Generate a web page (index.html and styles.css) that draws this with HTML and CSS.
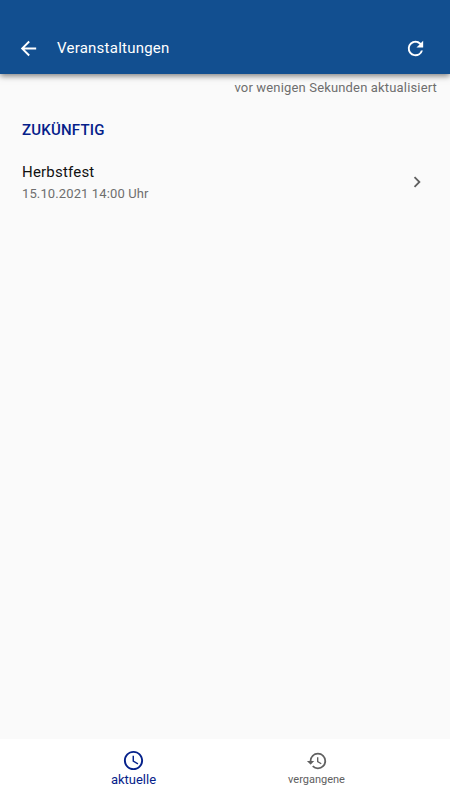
FILE: index.html
```html
<!DOCTYPE html>
<html lang="de">
<head>
    <meta charset="UTF-8">
    <meta name="viewport" content="width=device-width, initial-scale=1.0">
    <title>Veranstaltungen</title>
    <link rel="stylesheet" href="styles.css">
</head>
<body>
    <header class="app-bar">
        <button class="icon-button" aria-label="Zurück">
            <svg class="icon" viewBox="0 0 24 24"><path d="M20 11H7.83l5.59-5.59L12 4l-8 8 8 8 1.41-1.41L7.83 13H20v-2z"/></svg>
        </button>
        <h1 class="title">Veranstaltungen</h1>
        <button class="icon-button" aria-label="Aktualisieren">
            <svg class="icon" viewBox="0 0 24 24"><path d="M17.65 6.35A7.958 7.958 0 0 0 12 4a8 8 0 1 0 7.73 10h-2.08A5.99 5.99 0 0 1 12 18c-3.31 0-6-2.69-6-6s2.69-6 6-6c1.66 0 3.14.69 4.22 1.78L13 11h7V4l-2.35 2.35z"/></svg>
        </button>
    </header>

    <main class="content">
        <p class="updated">vor wenigen Sekunden aktualisiert</p>
        <h2 class="section-title">ZUKÜNFTIG</h2>
        <a class="event" href="#">
            <div class="event-text">
                <div class="event-name">Herbstfest</div>
                <div class="event-date">15.10.2021 14:00 Uhr</div>
            </div>
            <svg class="chevron" viewBox="0 0 24 24"><path d="M10 6 8.59 7.41 13.17 12l-4.58 4.59L10 18l6-6z"/></svg>
        </a>
    </main>

    <nav class="bottom-nav">
        <a class="tab active" href="#">
            <svg class="tab-icon" viewBox="0 0 24 24"><path d="M11.99 2C6.47 2 2 6.48 2 12s4.47 10 9.99 10C17.52 22 22 17.52 22 12S17.52 2 11.99 2zM12 20c-4.42 0-8-3.58-8-8s3.58-8 8-8 8 3.58 8 8-3.58 8-8 8zm.5-13H11v6l5.25 3.15.75-1.23-4.5-2.67z"/></svg>
            <span>aktuelle</span>
        </a>
        <a class="tab" href="#">
            <svg class="tab-icon" viewBox="0 0 24 24"><path d="M13 3a9 9 0 0 0-9 9H1l3.89 3.89.07.14L9 12H6c0-3.87 3.13-7 7-7s7 3.13 7 7-3.13 7-7 7c-1.93 0-3.68-.79-4.94-2.06l-1.42 1.42A8.954 8.954 0 0 0 13 21a9 9 0 0 0 0-18zm-1 5v5l4.28 2.54.72-1.21-3.5-2.08V8H12z"/></svg>
            <span>vergangene</span>
        </a>
    </nav>
</body>
</html>
```

FILE: styles.css
```css
body { font-family: Roboto, "Liberation Sans", sans-serif; display: flex; flex-direction: column; height: 100vh; margin: 0; background-color: #fafafa; color: #111; }
h1, h2, p { margin: 0; font-weight: 400; }
a { color: inherit; text-decoration: none; }

/* Kopfzeile, oben Platz für die Statusleiste */
.app-bar { height: 74px; box-sizing: border-box; padding: 22px 23px 0 17px; display: flex; align-items: center; background-color: #124f90; color: #fff; box-shadow: 0 2px 6px rgba(0, 0, 0, 0.5); z-index: 1; }
.icon-button { display: flex; padding: 0; border: 0; background: none; color: inherit; cursor: pointer; }
.icon { width: 23px; height: 23px; fill: currentColor; }
.title { flex-grow: 1; margin-left: 17px; font-size: 15px; letter-spacing: 0.24px; }

.content { flex-grow: 1; }
.updated { padding: 6px 13px 0 0; text-align: right; font-size: 13px; line-height: 16px; letter-spacing: 0.16px; color: #6e6e6e; }
.section-title { padding: 24px 22px 0; font-size: 15px; line-height: 20px; font-weight: 500; letter-spacing: 0.2px; color: #05218a; }
.event { display: flex; align-items: flex-start; justify-content: space-between; padding: 21px 22px 0; }
.event-name { font-size: 15px; line-height: 22px; letter-spacing: 0.2px; }
.event-date { font-size: 13px; line-height: 21px; letter-spacing: 0.12px; color: #6e6e6e; }
.chevron { width: 22px; height: 22px; margin-top: 10px; fill: #606060; }

.bottom-nav { height: 61px; display: flex; justify-content: center; background-color: #fff; }
.tab { width: 183px; display: flex; flex-direction: column; align-items: center; padding-top: 11px; box-sizing: border-box; font-size: 11px; line-height: 16px; color: #606060; }
.tab-icon { width: 22px; height: 22px; fill: currentColor; }
.active { padding-top: 10px; font-size: 13px; color: #05218a; }
.active .tab-icon { width: 23px; height: 23px; }
```
